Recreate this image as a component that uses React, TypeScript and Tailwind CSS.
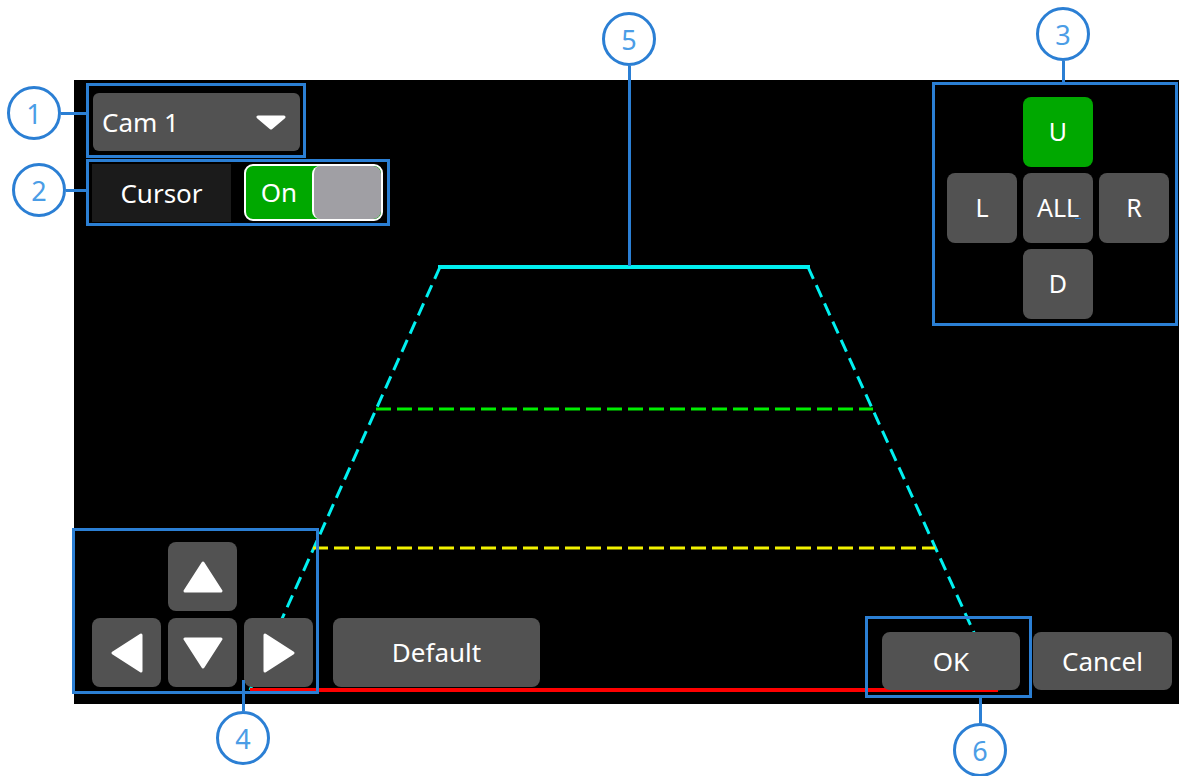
import React from "react";

const btn =
  "flex items-center justify-center rounded-[8px] text-white";
const gray = "bg-[#525252]";

function Tri({ dir }: { dir: "up" | "down" | "left" | "right" }) {
  const pts = {
    up: "20,2 38,30 2,30",
    down: "2,2 38,2 20,30",
    left: "30,2 30,38 2,20",
    right: "2,2 2,38 30,20",
  }[dir];
  const vertical = dir === "up" || dir === "down";
  return (
    <svg
      width={vertical ? 40 : 32}
      height={vertical ? 32 : 40}
      viewBox={vertical ? "0 0 40 32" : "0 0 32 40"}
    >
      <polygon
        points={pts}
        fill="#fff"
        stroke="#fff"
        strokeWidth={3}
        strokeLinejoin="round"
      />
    </svg>
  );
}

function Callout({ n, className }: { n: number; className: string }) {
  return (
    <div
      className={`absolute flex h-[54px] w-[54px] items-center justify-center rounded-full border-[3px] border-[#2b7fd4] bg-white text-[27px] leading-none text-[#4b9de6] ${className}`}
    >
      {n}
    </div>
  );
}

export default function App() {
  return (
    <div className="relative h-[776px] w-[1179px] overflow-hidden bg-white pl-[74px] pt-[80px] font-['Noto_Sans',sans-serif]">
      {/* device screen */}
      <div className="relative flex h-[624px] w-[1105px] flex-col bg-black">
        <svg
          className="absolute inset-0"
          width={1105}
          height={624}
          viewBox="0 0 1105 624"
        >
          <line x1={366} y1={187} x2={176} y2={610} stroke="#00f0f0" strokeWidth={3} strokeDasharray="13 7" />
          <line x1={734} y1={187} x2={926} y2={610} stroke="#00f0f0" strokeWidth={3} strokeDasharray="13 7" />
          <line x1={302} y1={329} x2={799} y2={329} stroke="#00ee00" strokeWidth={3} strokeDasharray="15 6" />
          <line x1={239} y1={468} x2={861} y2={468} stroke="#f2f200" strokeWidth={3} strokeDasharray="15 6" />
          <line x1={176} y1={610} x2={924} y2={610} stroke="#ff0000" strokeWidth={4} />
          <line x1={364} y1={187} x2={736} y2={187} stroke="#00f0f0" strokeWidth={4} />
        </svg>

        {/* top row */}
        <div className="relative flex justify-between">
          <div className="flex flex-col gap-[13px] pl-[18px] pt-[13px]">
            <div className={`${gray} ml-[1px] flex h-[58px] w-[207px] items-center justify-between rounded-[6px] pl-[9px] pr-[14px] text-[26px] text-white`}>
              <span>Cam 1</span>
              <svg width={30} height={15} viewBox="0 0 30 15">
                <polygon points="2,2 28,2 15,13" fill="#fff" stroke="#fff" strokeWidth={3} strokeLinejoin="round" />
              </svg>
            </div>
            <div className="flex gap-[13px]">
              <div className="flex h-[58px] w-[139px] items-center justify-center bg-[#1b1b1b] text-[26px] text-white">
                Cursor
              </div>
              <div className="flex h-[57px] w-[139px] overflow-hidden rounded-[9px] border-2 border-white bg-[#00a800]">
                <div className="flex flex-1 items-center justify-center text-[26px] text-white">
                  On
                </div>
                <div className="w-[69px] rounded-[8px] border-l-2 border-white bg-[#a09fa4]" />
              </div>
            </div>
          </div>

          <div className="grid grid-cols-[70px_70px_70px] grid-rows-[70px_70px_70px] gap-[6px] pr-[10px] pt-[17px] text-[25px]">
            <div className={`${btn} col-start-2 bg-[#00a800]`}>U</div>
            <div className={`${btn} ${gray} col-start-1`}>L</div>
            <div className={`${btn} ${gray} relative`}>
              ALL
              <span className="absolute left-[52px] top-[45px] h-[1px] w-[6px] bg-[#2b7fd4]" />
            </div>
            <div className={`${btn} ${gray}`}>R</div>
            <div className={`${btn} ${gray} col-start-2`}>D</div>
          </div>
        </div>

        {/* bottom row */}
        <div className="relative mt-auto flex items-end pb-[14px] pl-[18px] pr-[7px]">
          <div className="mb-[3px] grid grid-cols-[69px_69px_69px] grid-rows-[69px_69px] gap-[7px]">
            <div className={`${btn} ${gray} col-start-2`}>
              <Tri dir="up" />
            </div>
            <div className={`${btn} ${gray} col-start-1`}>
              <Tri dir="left" />
            </div>
            <div className={`${btn} ${gray}`}>
              <Tri dir="down" />
            </div>
            <div className={`${btn} ${gray}`}>
              <Tri dir="right" />
            </div>
          </div>
          <div className={`${btn} ${gray} mb-[3px] ml-[20px] h-[69px] w-[207px] text-[26px]`}>
            Default
          </div>
          <div className="ml-auto flex gap-[13px] text-[26px]">
            <div className={`${btn} ${gray} h-[58px] w-[138px]`}>OK</div>
            <div className={`${btn} ${gray} h-[58px] w-[139px]`}>Cancel</div>
          </div>
        </div>
      </div>

      {/* annotations */}
      <div className="pointer-events-none absolute inset-0">
        <div className="absolute left-[86px] top-[83px] h-[75px] w-[220px] border-[3px] border-[#2b7fd4]" />
        <div className="absolute left-[86px] top-[159px] h-[67px] w-[304px] border-[3px] border-[#2b7fd4]" />
        <div className="absolute left-[932px] top-[82px] h-[244px] w-[246px] border-[3px] border-[#2b7fd4]" />
        <div className="absolute left-[72px] top-[528px] h-[166px] w-[247px] border-[3px] border-[#2b7fd4]" />
        <div className="absolute left-[865px] top-[616px] h-[82px] w-[167px] border-[3px] border-[#2b7fd4]" />

        <div className="absolute left-[61px] top-[112px] h-[3px] w-[26px] bg-[#2b7fd4]" />
        <div className="absolute left-[66px] top-[189px] h-[3px] w-[21px] bg-[#2b7fd4]" />
        <div className="absolute left-[1062px] top-[61px] h-[22px] w-[3px] bg-[#2b7fd4]" />
        <div className="absolute left-[628px] top-[66px] h-[200px] w-[3px] bg-[#2b7fd4]" />
        <div className="absolute left-[242px] top-[680px] h-[31px] w-[3px] bg-[#2b7fd4]" />
        <div className="absolute left-[979px] top-[697px] h-[26px] w-[3px] bg-[#2b7fd4]" />

        <Callout n={1} className="left-[7px] top-[86px]" />
        <Callout n={2} className="left-[12px] top-[163px]" />
        <Callout n={3} className="left-[1036px] top-[7px]" />
        <Callout n={5} className="left-[602px] top-[12px]" />
        <Callout n={4} className="left-[216px] top-[711px]" />
        <Callout n={6} className="left-[953px] top-[723px]" />
      </div>
    </div>
  );
}
